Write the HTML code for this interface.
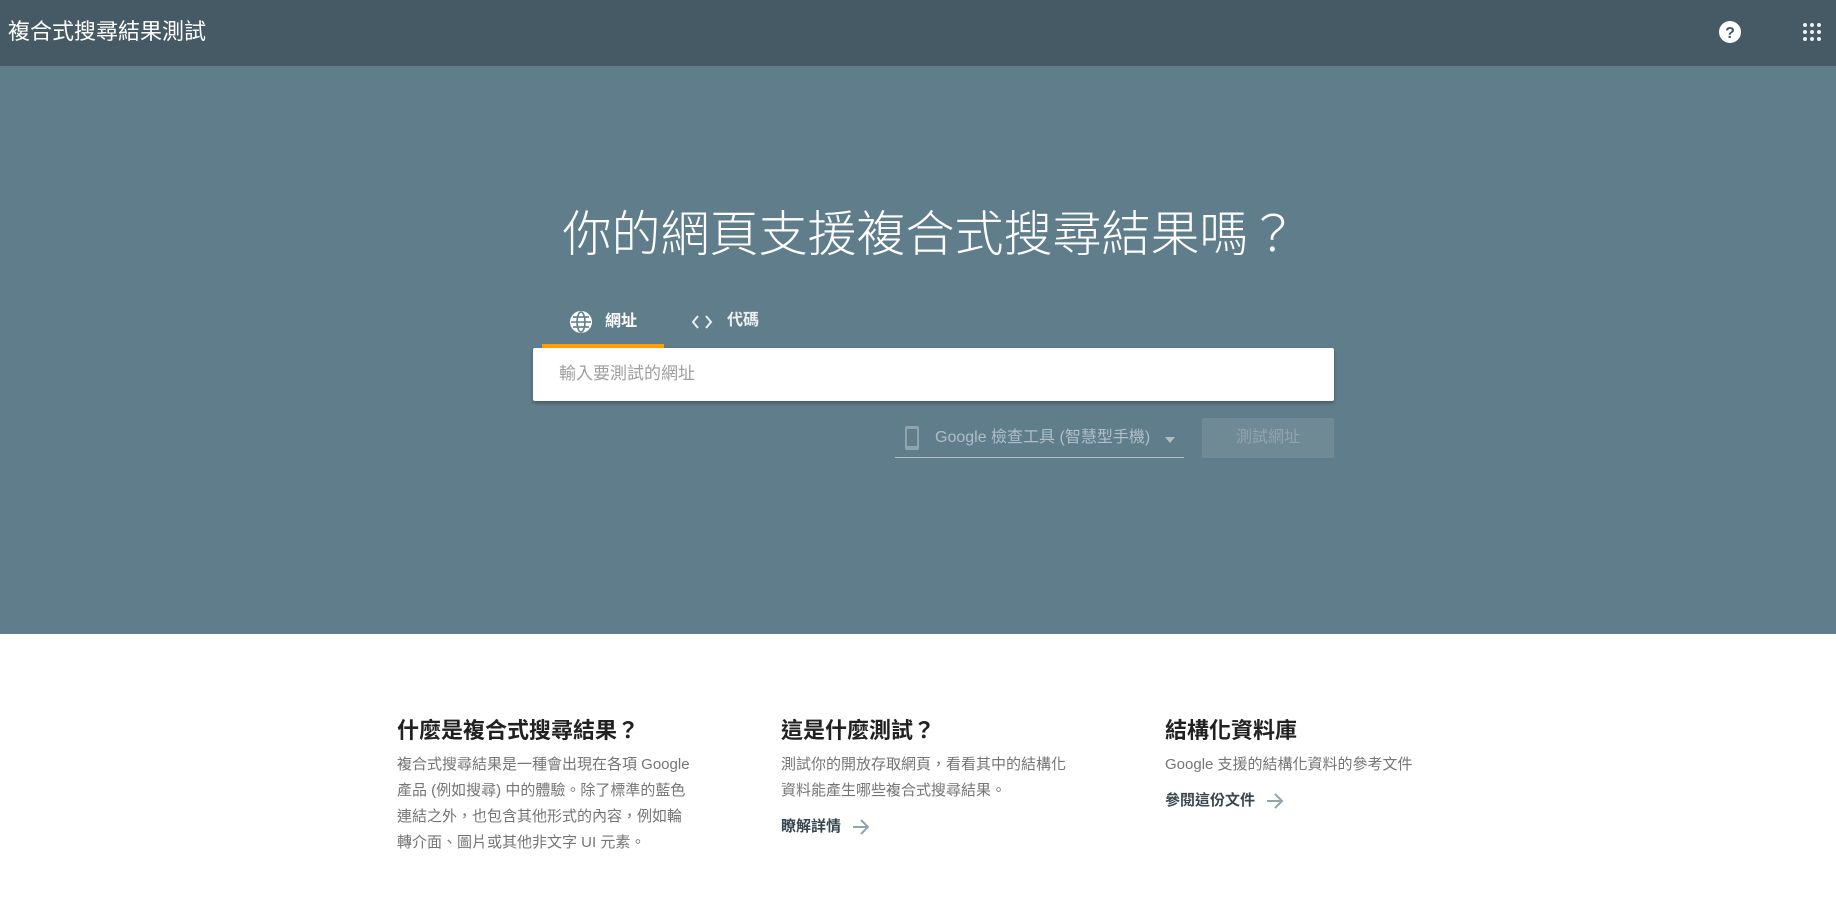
<!DOCTYPE html>
<html><head><meta charset="utf-8"><style>
*{margin:0;padding:0;box-sizing:border-box}
body{width:1836px;height:899px;overflow:hidden;background:#fff;font-family:"Liberation Sans","Noto Sans CJK TC",sans-serif;position:relative}
.hdr{position:absolute;left:0;top:0;width:1836px;height:66px;background:#455a64}
.hdr .t{position:absolute;left:8px;top:18px;font-size:22px;color:#fff;line-height:28px}
.hero{position:absolute;left:0;top:66px;width:1836px;height:568px;background:#607d8b}
.abs{position:absolute}
h1{position:absolute;left:12px;width:1836px;top:203px;text-align:center;font-weight:300;font-size:49px;color:#fff;line-height:64px;font-family:"Liberation Sans","Noto Sans CJK TC",sans-serif}
.col{position:absolute;top:716px;width:310px}
.col h2{font-size:22px;font-weight:bold;color:#212121;line-height:30px;margin-bottom:6px}
.col p{font-size:15px;color:#757575;line-height:26px}
.col a{display:block;font-size:15px;font-weight:bold;color:#37474f;line-height:26px;margin-top:10px;text-decoration:none}
.col a svg{vertical-align:middle;margin-left:10px}
</style></head><body>
<div class="hdr"><div class="t">複合式搜尋結果測試</div>
<svg class="abs" style="left:1718px;top:20px" width="24" height="24" viewBox="0 0 24 24"><circle cx="12" cy="12" r="11" fill="#fff"/><text x="12" y="18" text-anchor="middle" font-size="16" font-weight="bold" fill="#455a64" font-family="Liberation Sans">?</text></svg>
<svg class="abs" style="left:1802px;top:22px" width="20" height="20" viewBox="0 0 20 20" fill="#eceff1"><circle cx="3" cy="3" r="2"/><circle cx="10" cy="3" r="2"/><circle cx="17" cy="3" r="2"/><circle cx="3" cy="10" r="2"/><circle cx="10" cy="10" r="2"/><circle cx="17" cy="10" r="2"/><circle cx="3" cy="17" r="2"/><circle cx="10" cy="17" r="2"/><circle cx="17" cy="17" r="2"/></svg>
</div>
<div class="hero"></div>
<h1>你的網頁支援複合式搜尋結果嗎？</h1>
<svg class="abs" style="left:569px;top:310px" width="24" height="24" viewBox="0 0 24 24" fill="none" stroke="#fff" stroke-width="2"><circle cx="12" cy="12" r="10" fill="#fff"/><g stroke="#607d8b" stroke-width="1.6"><ellipse cx="12" cy="12" rx="4" ry="10"/><line x1="2" y1="12" x2="22" y2="12"/><line x1="4" y1="7" x2="20" y2="7"/><line x1="4" y1="17" x2="20" y2="17"/></g></svg>
<div class="abs" style="left:605px;top:310px;font-size:16px;font-weight:bold;color:#fff;line-height:24px">網址</div>
<svg class="abs" style="left:690px;top:312px" width="24" height="20" viewBox="0 0 24 20" fill="none" stroke="#eceff1" stroke-width="2"><path d="M8 4 L3 10 L8 16 M16 4 L21 10 L16 16"/></svg>
<div class="abs" style="left:727px;top:309px;font-size:16px;font-weight:bold;color:#eceff1;line-height:24px">代碼</div>
<div class="abs" style="left:542px;top:344px;width:122px;height:4px;background:#ffa000"></div>
<div class="abs" style="left:533px;top:348px;width:801px;height:53px;background:#fff;border-radius:2px;box-shadow:0 2px 3px rgba(0,0,0,.3)"></div>
<div class="abs" style="left:559px;top:362px;font-size:17px;color:#9e9e9e;line-height:24px">輸入要測試的網址</div>
<svg class="abs" style="left:904px;top:425px" width="16" height="26" viewBox="0 0 16 26"><rect x="1" y="1" width="14" height="24" rx="2" fill="#90a4ae"/><rect x="3" y="4" width="10" height="17" fill="#607d8b"/></svg>
<div class="abs" style="left:935px;top:427px;font-size:16px;color:#b0bec5;line-height:22px">Google 檢查工具 (智慧型手機)</div>
<svg class="abs" style="left:1164px;top:436px" width="12" height="8" viewBox="0 0 12 8"><path d="M1 1 L11 1 L6 7Z" fill="#b0bec5"/></svg>
<div class="abs" style="left:895px;top:457px;width:289px;height:1px;background:#b0bec5"></div>
<div class="abs" style="left:1202px;top:418px;width:132px;height:40px;background:#6f8995;border-radius:2px;color:#90a4ae;font-size:16px;line-height:40px;text-align:center">測試網址</div>

<div class="col" style="left:397px"><h2>什麼是複合式搜尋結果？</h2><p>複合式搜尋結果是一種會出現在各項 Google<br>產品 (例如搜尋) 中的體驗。除了標準的藍色<br>連結之外，也包含其他形式的內容，例如輪<br>轉介面、圖片或其他非文字 UI 元素。</p></div>
<div class="col" style="left:781px"><h2>這是什麼測試？</h2><p>測試你的開放存取網頁，看看其中的結構化<br>資料能產生哪些複合式搜尋結果。</p><a>瞭解詳情<svg width="20" height="20" viewBox="0 0 20 20" fill="none" stroke="#90a4ae" stroke-width="2"><path d="M2 10 H17 M10 3 L17 10 L10 17"/></svg></a></div>
<div class="col" style="left:1165px"><h2>結構化資料庫</h2><p>Google 支援的結構化資料的參考文件</p><a>參閱這份文件<svg width="20" height="20" viewBox="0 0 20 20" fill="none" stroke="#90a4ae" stroke-width="2"><path d="M2 10 H17 M10 3 L17 10 L10 17"/></svg></a></div>
</body></html>
